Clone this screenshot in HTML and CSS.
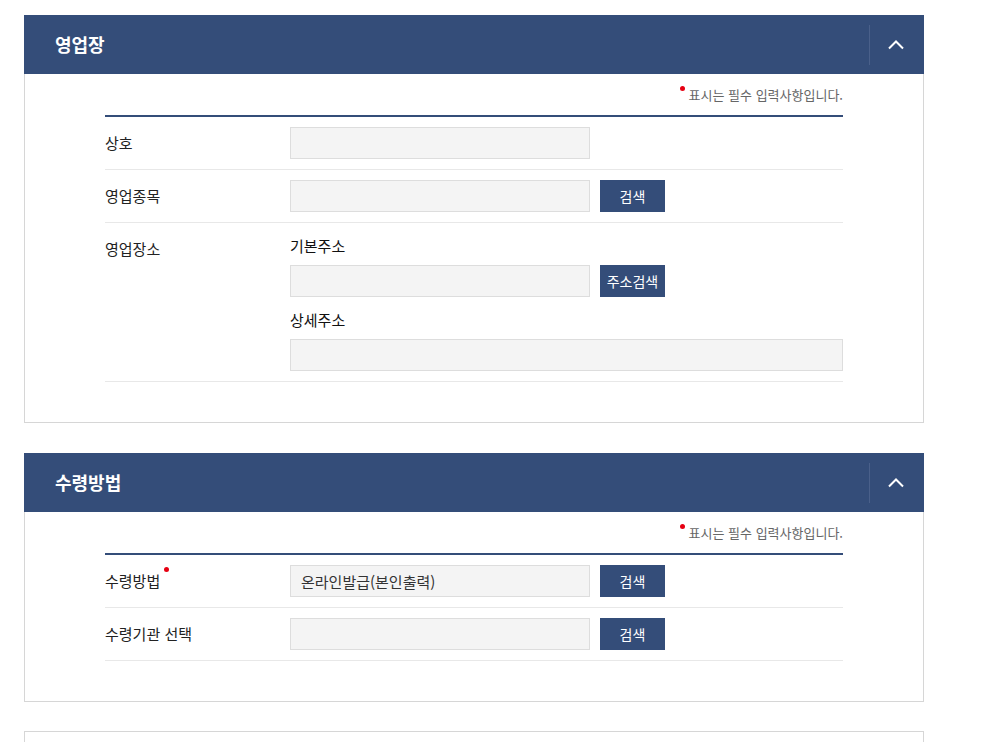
FILE: index.html
```html
<!DOCTYPE html>
<html lang="ko">
<head>
  <meta charset="utf-8">
  <title>영업장 / 수령방법</title>
  <link rel="stylesheet" href="styles.css">
</head>
<body>
  <div class="page">
    <section class="panel">
      <div class="panel-head">
        <h2>영업장</h2>
        <button class="panel-toggle" type="button" aria-label="접기">
          <svg width="16" height="10" viewBox="0 0 16 10"><polyline points="1,8.5 8,1.5 15,8.5" fill="none" stroke="#fff" stroke-width="2"/></svg>
        </button>
      </div>
      <div class="panel-body">
        <p class="req-note"><span class="req-dot"></span>표시는 필수 입력사항입니다.</p>
        <div class="form-table">
          <div class="form-row">
            <div class="form-label">상호</div>
            <div class="form-field"><input type="text" class="text-input"></div>
          </div>
          <div class="form-row">
            <div class="form-label">영업종목</div>
            <div class="form-field"><input type="text" class="text-input"><button class="btn" type="button">검색</button></div>
          </div>
          <div class="form-row">
            <div class="form-label">영업장소</div>
            <div class="form-field stack">
              <div class="sub-label">기본주소</div>
              <div class="field-line"><input type="text" class="text-input"><button class="btn" type="button">주소검색</button></div>
              <div class="sub-label sub-gap">상세주소</div>
              <div class="field-line"><input type="text" class="text-input wide"></div>
            </div>
          </div>
        </div>
      </div>
    </section>

    <section class="panel">
      <div class="panel-head">
        <h2>수령방법</h2>
        <button class="panel-toggle" type="button" aria-label="접기">
          <svg width="16" height="10" viewBox="0 0 16 10"><polyline points="1,8.5 8,1.5 15,8.5" fill="none" stroke="#fff" stroke-width="2"/></svg>
        </button>
      </div>
      <div class="panel-body">
        <p class="req-note"><span class="req-dot"></span>표시는 필수 입력사항입니다.</p>
        <div class="form-table">
          <div class="form-row">
            <div class="form-label">수령방법<span class="req-dot mark"></span></div>
            <div class="form-field"><input type="text" class="text-input" value="온라인발급(본인출력)"><button class="btn" type="button">검색</button></div>
          </div>
          <div class="form-row">
            <div class="form-label">수령기관 선택</div>
            <div class="form-field"><input type="text" class="text-input"><button class="btn" type="button">검색</button></div>
          </div>
        </div>
      </div>
    </section>

    <section class="panel panel-next"></section>
  </div>
</body>
</html>
```

FILE: styles.css
```css
body {
  margin: 0;
  font-family: "Noto Sans CJK KR", "Noto Sans", sans-serif;
  color: #333;
  background-color: #fff;
}

.page {
  width: 900px;
  padding: 15px 24px 0;
}

.panel {
  margin-bottom: 30px;
}

.panel-head {
  display: flex;
  align-items: center;
  height: 59px;
  background-color: #344d79;
}

.panel-head h2 {
  flex: 1;
  margin: 0 0 2px;
  padding-left: 31px;
  font-size: 18px;
  font-weight: 700;
  line-height: 24px;
  color: #fff;
}

.panel-toggle {
  display: flex;
  align-items: center;
  justify-content: center;
  width: 55px;
  height: 40px;
  padding: 0 3px 0 0;
  border: 0;
  border-left: 1px solid #4a608a;
  background: none;
  cursor: pointer;
}

.panel-body {
  border: 1px solid #d6d6d6;
  border-top: 0;
  padding: 11px 80px 40px;
}

.req-note {
  margin: 0 0 10px;
  text-align: right;
  font-size: 13px;
  line-height: 20px;
  color: #666;
}

.req-dot {
  display: inline-block;
  width: 5px;
  height: 5px;
  margin: 1px 4px 0 0;
  border-radius: 50%;
  background-color: #e60012;
  vertical-align: top;
}

.req-dot.mark {
  margin: 2px 0 0 4px;
}

.form-table {
  border-top: 2px solid #344d79;
}

.form-row {
  display: flex;
  padding: 10px 0;
  border-bottom: 1px solid #e8e8e8;
}

.form-label {
  flex-shrink: 0;
  width: 185px;
  font-size: 15px;
  line-height: 32px;
  color: #222;
}

.form-field {
  flex: 1;
  display: flex;
  align-items: center;
}

.form-field.stack {
  display: block;
}

.field-line {
  display: flex;
}

.sub-label {
  margin: 1px 0 7px;
  font-size: 15px;
  line-height: 24px;
  color: #111;
}

.sub-gap {
  margin-top: 11px;
}

.text-input {
  width: 300px;
  height: 32px;
  box-sizing: border-box;
  padding: 0 10px;
  border: 1px solid #ddd;
  background-color: #f4f4f4;
  font-family: inherit;
  font-size: 15px;
  color: #333;
}

.text-input.wide {
  width: 100%;
}

.btn {
  width: 65px;
  height: 32px;
  margin-left: 10px;
  padding: 0;
  border: 0;
  background-color: #344d79;
  color: #fff;
  font-family: inherit;
  font-size: 14px;
  cursor: pointer;
}

.panel-next {
  height: 60px;
  margin-top: -1px;
  border: 1px solid #d6d6d6;
}
```
